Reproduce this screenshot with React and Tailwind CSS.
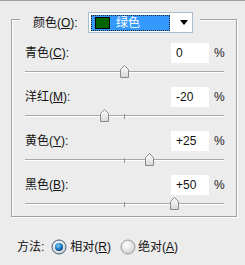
import React from "react";

const FONT = { fontFamily: '"Liberation Sans", "Noto Sans CJK SC", sans-serif' };

const rows = [
  { label: "青色", key: "C", value: "0", pos: 0 },
  { label: "洋红", key: "M", value: "-20", pos: -20 },
  { label: "黄色", key: "Y", value: "+25", pos: 25 },
  { label: "黑色", key: "B", value: "+50", pos: 50 },
];

const Thumb = () => (
  <svg width="9" height="13" viewBox="0 0 9 13">
    <defs>
      <linearGradient id="tg" x1="0" y1="0" x2="0" y2="1">
        <stop offset="0" stopColor="#ffffff" />
        <stop offset="1" stopColor="#d6d6d6" />
      </linearGradient>
    </defs>
    <path d="M0.5 12.5 V4.5 L4.5 0.5 L8.5 4.5 V12.5 Z" fill="url(#tg)" stroke="#8a8a8a" />
  </svg>
);

const Slider = ({ pos }) => {
  const left = 99 + (pos / 100) * 99;
  return (
    <div className="relative ml-[13px] mt-[2px] h-[14px] w-[199px]">
      <div className="absolute left-0 top-[6px] h-[2px] w-full border-t border-[#a8a8a8] bg-white" />
      <div className="absolute left-[99px] top-[5px] h-[5px] w-px bg-[#9a9a9a]" />
      <div className="absolute top-0" style={{ left: left - 4 }}>
        <Thumb />
      </div>
    </div>
  );
};

const Row = ({ label, k, value, pos }) => (
  <div className="h-[44px]">
    <div className="flex h-[20px] items-center pl-[13px]">
      <span className="w-[146px] text-[12px] text-[#111]">
        {label}(<span className="underline">{k}</span>):
      </span>
      <div className="flex h-[20px] w-[38px] items-center bg-white pl-[5px] text-[12px] text-[#111]">
        {value}
      </div>
      <span className="ml-[5px] text-[12px] text-[#222]">%</span>
    </div>
    <Slider pos={pos} />
  </div>
);

const Radio = ({ checked }) => (
  <svg width="16" height="16" viewBox="0 0 16 16">
    <defs>
      <radialGradient id="rg1" cx="0.4" cy="0.35" r="0.7">
        <stop offset="0" stopColor="#ffffff" />
        <stop offset="1" stopColor="#cfcfcf" />
      </radialGradient>
      <radialGradient id="rg2" cx="0.4" cy="0.35" r="0.7">
        <stop offset="0" stopColor="#7fd0ff" />
        <stop offset="0.6" stopColor="#1a78c2" />
        <stop offset="1" stopColor="#0b3f7a" />
      </radialGradient>
    </defs>
    <circle cx="8" cy="8" r="7" fill="url(#rg1)" stroke={checked ? "#3a5a78" : "#9a9a9a"} />
    {checked && <circle cx="8" cy="8" r="4" fill="url(#rg2)" />}
  </svg>
);

export default function App() {
  return (
    <div className="h-[265px] w-[245px] overflow-hidden border-t border-[#a0a0a0] bg-[#ececec]" style={FONT}>
      <div className="ml-[11px] mt-[18px] h-[198px] w-[226px] border border-[#a0a0a0] shadow-[1px_1px_0_#ffffff,inset_1px_1px_0_#ffffff]">
        {/* header straddles the top border */}
        <div className="-mt-[8px] ml-[8px] flex h-[21px] w-[180px] items-center bg-[#ececec]">
          <span className="ml-[13px] w-[55px] text-[12px] text-[#111]">
            颜色(<span className="underline">O</span>):
          </span>
          <div className="flex h-[21px] w-[105px] items-center border border-[#a9bcd0] bg-white pl-[2px]">
            <div className="flex h-[16px] w-[79px] items-center border border-dotted border-[#222] bg-[#3399ff] pl-[3px]">
              <div className="h-[12px] w-[15px] border border-black bg-[#006400]" />
              <span className="ml-[6px] text-[12px] text-white">绿色</span>
            </div>
            <svg className="ml-[10px]" width="8" height="5" viewBox="0 0 8 5">
              <path d="M0 0 H8 L4 5 Z" fill="#000" />
            </svg>
          </div>
        </div>
        <div className="mt-[10px]">
          {rows.map((r) => (
            <Row key={r.key} label={r.label} k={r.key} value={r.value} pos={r.pos} />
          ))}
        </div>
      </div>
      <div className="ml-[17px] mt-[21px] flex items-center text-[12px] text-[#111]">
        <span>方法:</span>
        <span className="ml-[7px] flex items-center">
          <Radio checked />
        </span>
        <span className="ml-[3px]">
          相对(<span className="underline">R</span>)
        </span>
        <span className="ml-[9px] flex items-center">
          <Radio />
        </span>
        <span className="ml-[2px]">
          绝对(<span className="underline">A</span>)
        </span>
      </div>
    </div>
  );
}
